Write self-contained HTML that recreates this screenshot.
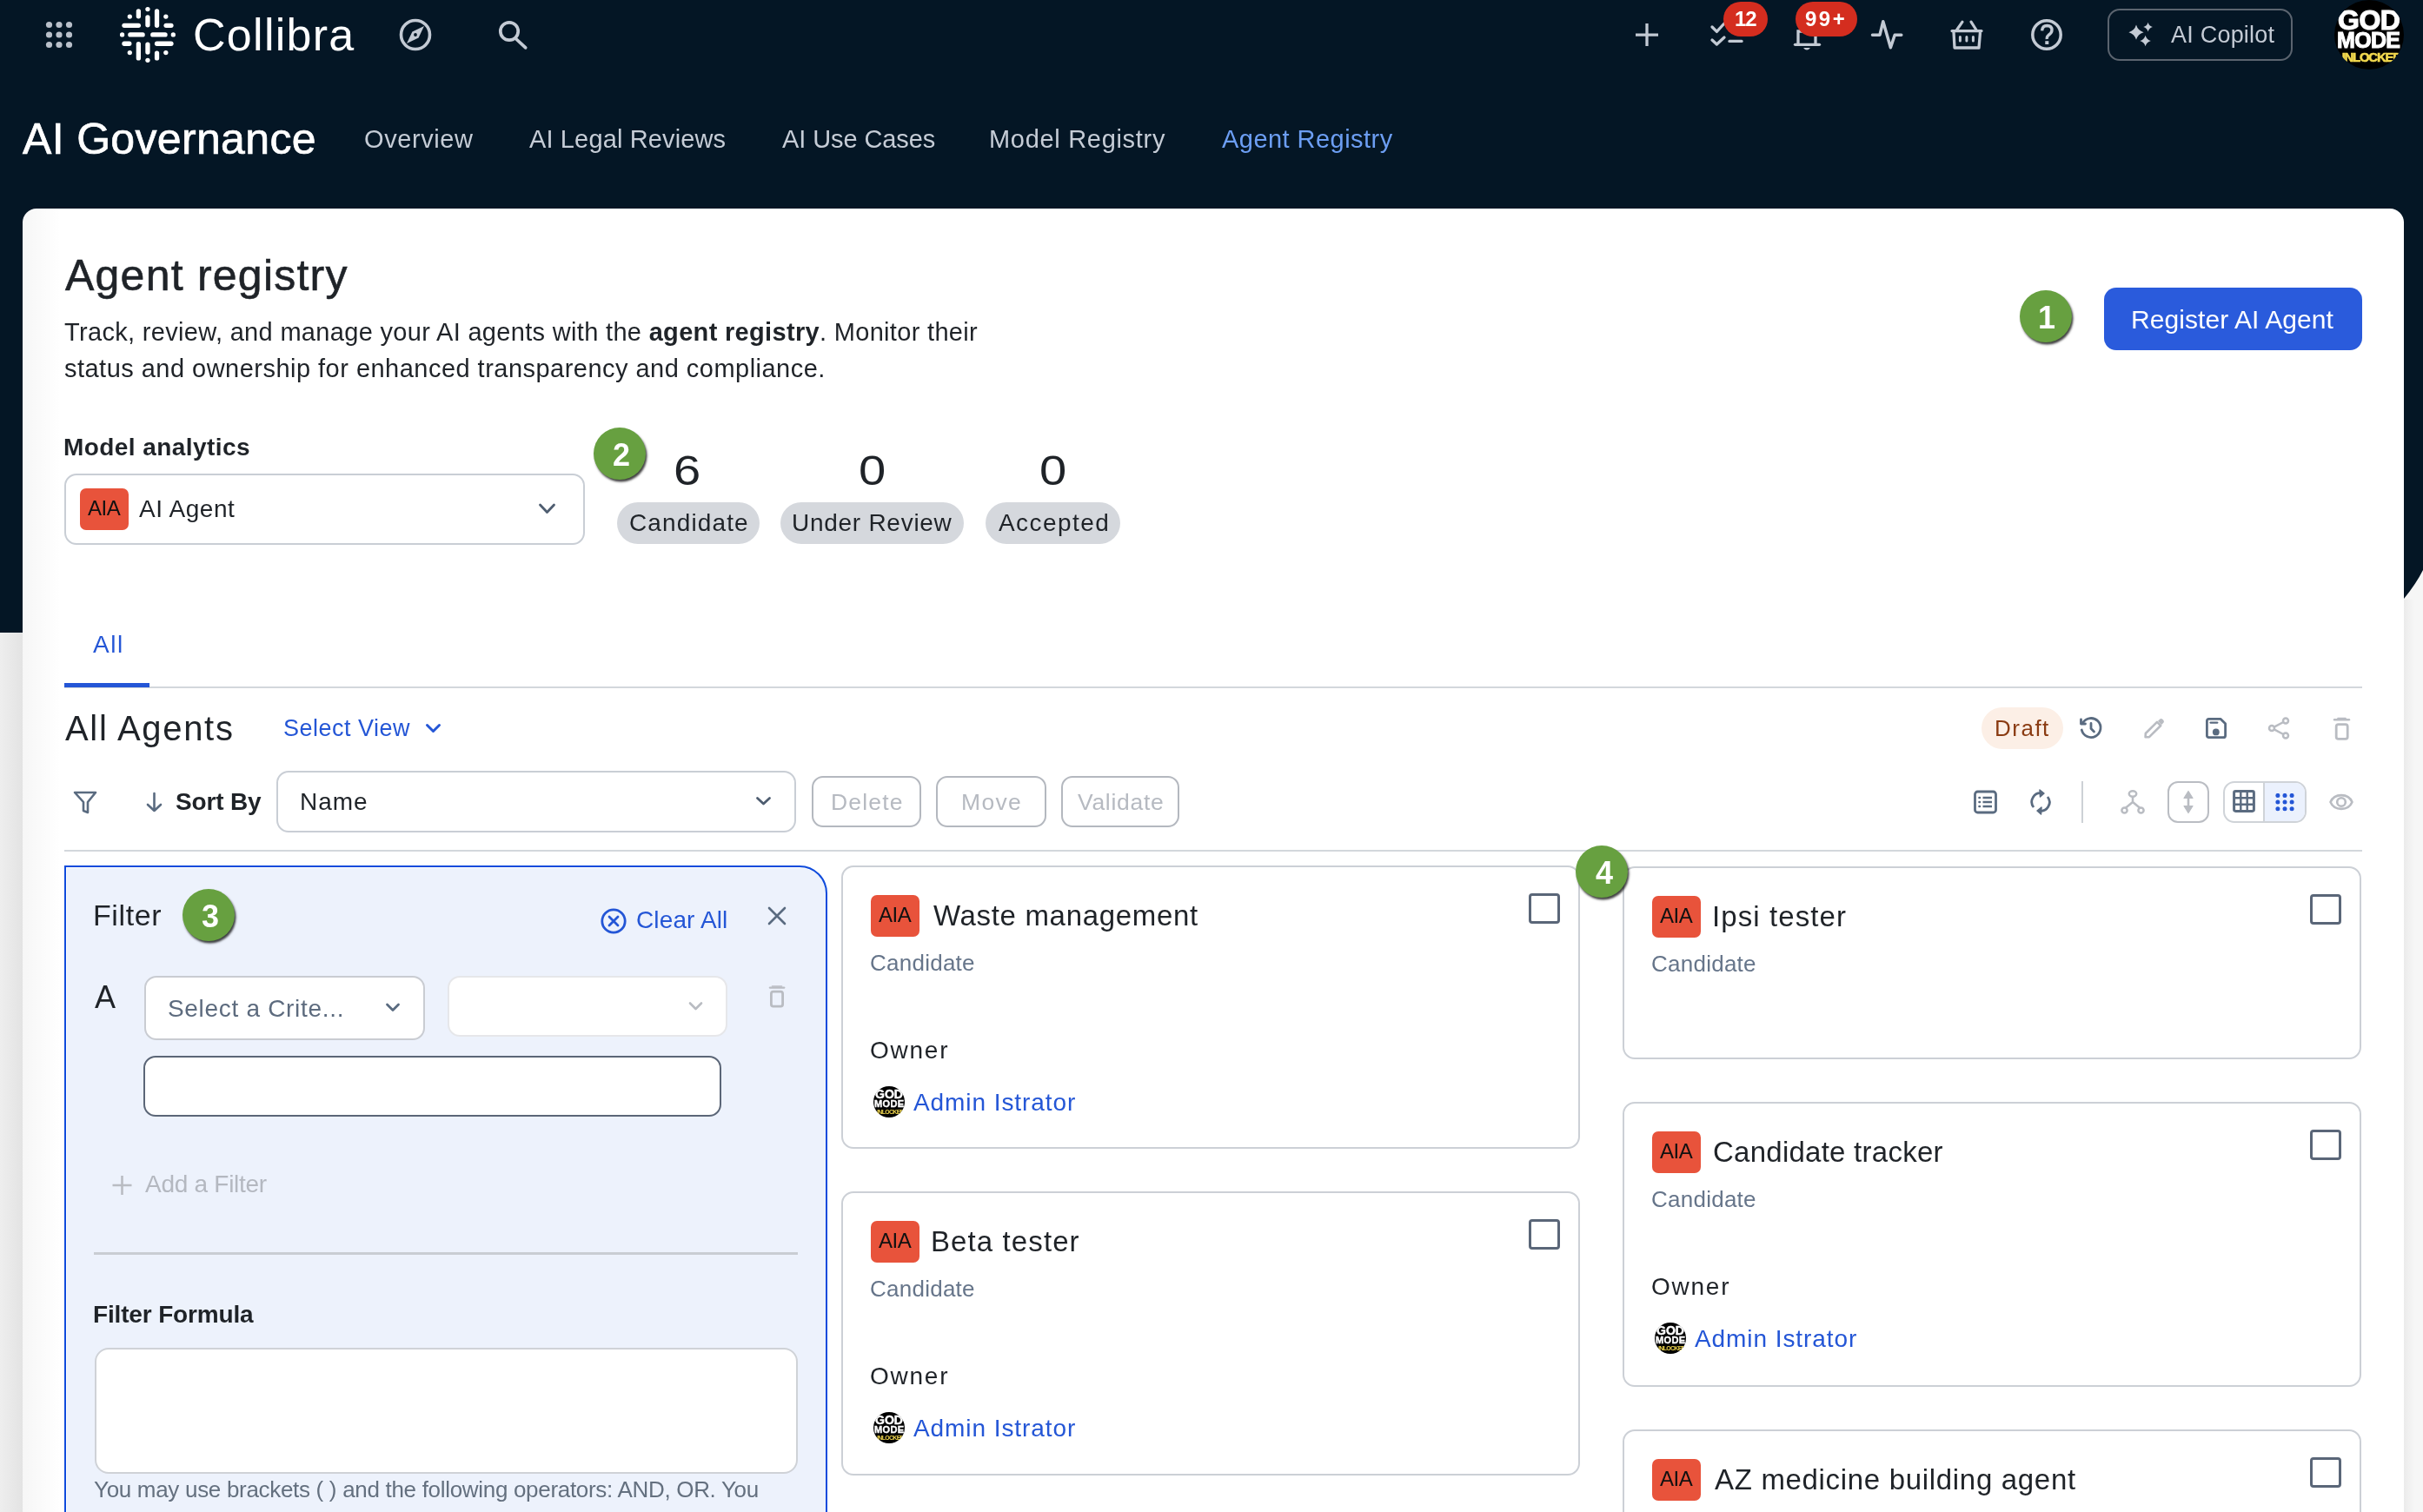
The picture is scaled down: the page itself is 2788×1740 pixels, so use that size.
<!DOCTYPE html><html><head><meta charset="utf-8"><style>
html,body{margin:0;padding:0;width:2788px;height:1740px;overflow:hidden;background:#f6f6f6}
body{position:relative;font-family:"Liberation Sans",sans-serif}
.t{position:absolute;white-space:nowrap;line-height:1;will-change:transform}
b{font-weight:700}
</style></head><body>
<div style="position:absolute;left:0px;top:0px;width:2788px;height:728px;background:#041625"></div>
<div style="position:absolute;left:0px;top:728px;width:26px;height:1012px;background:linear-gradient(90deg,#eeeeee,#e3e3e3)"></div>
<div style="position:absolute;left:2766px;top:689px;width:22px;height:1051px;background:linear-gradient(90deg,#ebebeb,#f6f6f6 12px)"></div>
<svg style="position:absolute;left:2766px;top:640px;" width="22" height="50" viewBox="0 0 22 50" fill="none"><path d="M0 49 Q14 32 22 16 L22 50 L0 50 Z" fill="#f6f6f6"/></svg>
<div style="position:absolute;left:26px;top:240px;width:2740px;height:1520px;background:linear-gradient(90deg,rgba(0,0,0,0.035),rgba(0,0,0,0) 44px),#fff;border-radius:16px 16px 0 0"></div>
<svg style="position:absolute;left:0px;top:0px;" width="120" height="80" viewBox="0 0 120 80" fill="none"><circle cx="56.5" cy="28.5" r="3.6" fill="#b9c0ca"/><circle cx="56.5" cy="40.0" r="3.6" fill="#b9c0ca"/><circle cx="56.5" cy="51.5" r="3.6" fill="#b9c0ca"/><circle cx="68.0" cy="28.5" r="3.6" fill="#b9c0ca"/><circle cx="68.0" cy="40.0" r="3.6" fill="#b9c0ca"/><circle cx="68.0" cy="51.5" r="3.6" fill="#b9c0ca"/><circle cx="79.5" cy="28.5" r="3.6" fill="#b9c0ca"/><circle cx="79.5" cy="40.0" r="3.6" fill="#b9c0ca"/><circle cx="79.5" cy="51.5" r="3.6" fill="#b9c0ca"/></svg>
<svg style="position:absolute;left:130px;top:0px;" width="80" height="80" viewBox="0 0 1512 1512" fill="none"><line x1="555" y1="245" x2="555" y2="355" stroke="#fff" stroke-width="100" stroke-linecap="round"/><line x1="555" y1="955" x2="555" y2="1265" stroke="#fff" stroke-width="100" stroke-linecap="round"/><line x1="755" y1="375" x2="755" y2="545" stroke="#fff" stroke-width="100" stroke-linecap="round"/><line x1="755" y1="965" x2="755" y2="1135" stroke="#fff" stroke-width="100" stroke-linecap="round"/><line x1="955" y1="245" x2="955" y2="555" stroke="#fff" stroke-width="100" stroke-linecap="round"/><line x1="955" y1="1155" x2="955" y2="1265" stroke="#fff" stroke-width="100" stroke-linecap="round"/><line x1="245" y1="555" x2="555" y2="555" stroke="#fff" stroke-width="100" stroke-linecap="round"/><line x1="1155" y1="555" x2="1265" y2="555" stroke="#fff" stroke-width="100" stroke-linecap="round"/><line x1="375" y1="755" x2="645" y2="755" stroke="#fff" stroke-width="100" stroke-linecap="round"/><line x1="865" y1="755" x2="1135" y2="755" stroke="#fff" stroke-width="100" stroke-linecap="round"/><line x1="245" y1="950" x2="355" y2="950" stroke="#fff" stroke-width="100" stroke-linecap="round"/><line x1="955" y1="950" x2="1265" y2="950" stroke="#fff" stroke-width="100" stroke-linecap="round"/><circle cx="755" cy="200" r="50.0" fill="#fff"/><circle cx="755" cy="1310" r="50.0" fill="#fff"/><circle cx="200" cy="755" r="50.0" fill="#fff"/><circle cx="1310" cy="755" r="50.0" fill="#fff"/><circle cx="365" cy="360" r="50.0" fill="#fff"/><circle cx="1150" cy="360" r="50.0" fill="#fff"/><circle cx="365" cy="1145" r="50.0" fill="#fff"/><circle cx="1150" cy="1145" r="50.0" fill="#fff"/></svg>
<div id="t1" class="t" style="left:222.00px;top:14.47px;font-size:52px;color:#ffffff;font-weight:400;letter-spacing:1.286px;">Collibra</div>
<svg style="position:absolute;left:450px;top:12px;" width="56" height="56" viewBox="0 0 56 56" fill="none"><circle cx="28" cy="28" r="16.5" stroke="#c3cad4" stroke-width="3.6"/><path d="M38 18 L31.6 31.6 L18 38 L24.4 24.4 Z" fill="#c3cad4"/><circle cx="28" cy="28" r="1.9" fill="#041625"/></svg>
<svg style="position:absolute;left:560px;top:10px;" width="56" height="56" viewBox="0 0 56 56" fill="none"><circle cx="26" cy="26" r="10.2" stroke="#c3cad4" stroke-width="3.7"/><line x1="33.5" y1="34.5" x2="44.7" y2="44.9" stroke="#c3cad4" stroke-width="3.7" stroke-linecap="round"/></svg>
<svg style="position:absolute;left:1870px;top:10px;" width="50" height="60" viewBox="0 0 50 60" fill="none"><path d="M12 30.1 H38 M25 17 V43" stroke="#c3cad4" stroke-width="3.3"/></svg>
<svg style="position:absolute;left:1960px;top:10px;" width="60" height="60" viewBox="0 0 60 60" fill="none"><path d="M10 21 L15.4 26.4 L24 17 M10 36 L15.4 41 L24 33" stroke="#c3cad4" stroke-width="3.3" stroke-linecap="round" stroke-linejoin="round"/><line x1="30" y1="37.4" x2="44" y2="37.4" stroke="#c3cad4" stroke-width="3.3" stroke-linecap="round"/></svg>
<svg style="position:absolute;left:2055px;top:10px;" width="50" height="60" viewBox="0 0 50 60" fill="none"><path d="M14 42 V26 H34 V42" stroke="#c3cad4" stroke-width="3.3"/><line x1="10.5" y1="41.3" x2="38.5" y2="41.3" stroke="#c3cad4" stroke-width="3.3" stroke-linecap="round"/><path d="M20 45 H28 Q24 50 20 45Z" fill="#c3cad4"/></svg>
<div style="position:absolute;left:1983px;top:2px;width:51px;height:40px;background:#d42d1f;border-radius:20px"></div>
<div id="t2" class="t" style="left:1996.00px;top:9.98px;font-size:24px;color:#fff;font-weight:700;letter-spacing:-1.000px;">12</div>
<div style="position:absolute;left:2066px;top:2px;width:71px;height:40px;background:#d42d1f;border-radius:20px"></div>
<div id="t3" class="t" style="left:2077.40px;top:9.98px;font-size:24px;color:#fff;font-weight:700;letter-spacing:2.500px;">99+</div>
<svg style="position:absolute;left:2140px;top:10px;" width="60" height="60" viewBox="0 0 60 60" fill="none"><polyline points="14.5,30.2 23,30.2 26.8,14.7 35.4,44.7 40.2,30.2 47.8,30.2" stroke="#c3cad4" stroke-width="3.5" stroke-linecap="round" stroke-linejoin="round"/></svg>
<svg style="position:absolute;left:2230px;top:10px;" width="60" height="60" viewBox="0 0 60 60" fill="none"><line x1="16" y1="25.6" x2="50" y2="25.6" stroke="#c3cad4" stroke-width="3.2" stroke-linecap="round"/><path d="M18 27 L19 45 H47 L48.5 27" stroke="#c3cad4" stroke-width="3.3" stroke-linejoin="round"/><path d="M21.5 24.5 L28 15.2 M44 24.5 L38 15.2" stroke="#c3cad4" stroke-width="3.2" stroke-linecap="round"/><path d="M25.4 32.5 V37 M32.9 32.5 V37 M40.4 32.5 V37" stroke="#c3cad4" stroke-width="3" stroke-linecap="round"/></svg>
<svg style="position:absolute;left:2325px;top:10px;" width="60" height="60" viewBox="0 0 60 60" fill="none"><circle cx="30" cy="30" r="16.2" stroke="#c3cad4" stroke-width="3.5"/><path d="M24.6 25.4 Q25 19.5 30.5 19.5 Q36 19.7 36 24.5 Q36 28 32 30.5 Q30 32 30.3 35" stroke="#c3cad4" stroke-width="3.4" fill="none"/><rect x="28.3" y="37.2" width="4" height="3.8" fill="#c3cad4"/></svg>
<div style="position:absolute;left:2425px;top:10px;width:213px;height:60px;box-sizing:border-box;border:2.5px solid #5b646f;border-radius:14px"></div>
<svg style="position:absolute;left:2440px;top:15px;" width="50" height="50" viewBox="0 0 50 50" fill="none"><path d="M18 13.6 Q19.892 20.308 26.6 22.2 Q19.892 24.092 18 30.799999999999997 Q16.108 24.092 9.4 22.2 Q16.108 20.308 18 13.6Z" fill="#c3cad4"/><path d="M31.6 10.8 Q32.766 14.934000000000001 36.9 16.1 Q32.766 17.266000000000002 31.6 21.400000000000002 Q30.434 17.266000000000002 26.3 16.1 Q30.434 14.934000000000001 31.6 10.8Z" fill="#c3cad4"/><path d="M28.6 25.7 Q29.986 30.614 34.9 32 Q29.986 33.386 28.6 38.3 Q27.214000000000002 33.386 22.3 32 Q27.214000000000002 30.614 28.6 25.7Z" fill="#c3cad4"/></svg>
<div id="t4" class="t" style="left:2498.20px;top:26.54px;font-size:27px;color:#c3cad4;font-weight:400;letter-spacing:0.222px;">AI Copilot</div>
<div style="position:absolute;left:2686px;top:0px;width:80px;height:80px;border-radius:50%;background:#000;overflow:hidden"></div>
<div id="t5" class="t" style="left:2690.00px;top:7.11px;font-size:32px;color:#fff;font-weight:700;letter-spacing:-0.500px;-webkit-text-stroke:1.2px #fff;clip-path:circle(40px at 36.00px 32.89px)">GOD</div>
<div id="t6" class="t" style="left:2689.00px;top:33.83px;font-size:25px;color:#fff;font-weight:700;letter-spacing:-0.667px;-webkit-text-stroke:1px #fff;clip-path:circle(40px at 37.00px 6.17px)">MODE</div>
<div id="t7" class="t" style="left:2688.00px;top:57.80px;font-size:15px;color:#f3d94e;font-weight:700;letter-spacing:-1.286px;-webkit-text-stroke:0.6px #f3d94e;clip-path:circle(40px at 38.00px -17.80px)">UNLOCKED</div>
<div id="t8" class="t" style="left:26.00px;top:134.66px;font-size:50px;color:#ffffff;font-weight:400;letter-spacing:0.333px;-webkit-text-stroke:0.7px #fff">AI Governance</div>
<div id="t9" class="t" style="left:419.00px;top:146.45px;font-size:29px;color:#c5ccd6;font-weight:400;letter-spacing:0.571px;">Overview</div>
<div id="t10" class="t" style="left:609.00px;top:146.45px;font-size:29px;color:#c5ccd6;font-weight:400;letter-spacing:0.133px;">AI Legal Reviews</div>
<div id="t11" class="t" style="left:900.00px;top:146.45px;font-size:29px;color:#c5ccd6;font-weight:400;letter-spacing:-0.091px;">AI Use Cases</div>
<div id="t12" class="t" style="left:1138.00px;top:146.45px;font-size:29px;color:#c5ccd6;font-weight:400;letter-spacing:0.692px;">Model Registry</div>
<div id="t13" class="t" style="left:1406.00px;top:146.45px;font-size:29px;color:#6c9ef3;font-weight:400;letter-spacing:0.462px;">Agent Registry</div>
<div id="t14" class="t" style="left:75.00px;top:291.67px;font-size:50px;color:#1f2328;font-weight:400;letter-spacing:1.231px;-webkit-text-stroke:0.6px #1f2328">Agent registry</div>
<div id="t15" class="t" style="left:74.00px;top:368.45px;font-size:29px;color:#1f2328;font-weight:400;letter-spacing:0.321px;">Track, review, and manage your AI agents with the <b>agent registry</b>. Monitor their</div>
<div id="t16" class="t" style="left:74.00px;top:410.45px;font-size:29px;color:#1f2328;font-weight:400;letter-spacing:0.475px;">status and ownership for enhanced transparency and compliance.</div>
<div style="position:absolute;left:2421px;top:331px;width:297px;height:72px;background:#2a5bdc;border-radius:14px"></div>
<div id="t17" class="t" style="left:2452.00px;top:352.60px;font-size:30px;color:#fff;font-weight:400;letter-spacing:0.062px;">Register AI Agent</div>
<div style="position:absolute;left:2324px;top:334px;width:60px;height:60px;background:#67a040;border-radius:50%;box-shadow:1.5px 2.5px 2.5px rgba(0,0,0,0.75)"></div>
<div id="t18" class="t" style="left:2344.50px;top:347.52px;font-size:36px;color:#fff;font-weight:700;letter-spacing:0.000px;">1</div>
<div id="t19" class="t" style="left:73.00px;top:501.29px;font-size:28px;color:#1f2328;font-weight:700;letter-spacing:0.429px;">Model analytics</div>
<div style="position:absolute;left:74px;top:545px;width:599px;height:82px;box-sizing:border-box;border:2px solid #c9ced5;border-radius:14px;background:#fff"></div>
<div style="position:absolute;left:92px;top:562px;width:56px;height:48px;background:#e8533b;border-radius:7px"></div>
<div id="t20" class="t" style="left:101.00px;top:572.68px;font-size:24px;color:#111;font-weight:400;letter-spacing:-0.500px;">AIA</div>
<div id="t21" class="t" style="left:160.00px;top:572.29px;font-size:28px;color:#1f2328;font-weight:400;letter-spacing:0.571px;">AI Agent</div>
<svg style="position:absolute;left:612px;top:570px;" width="36" height="30" viewBox="0 0 36 30" fill="none"><path d="M9.5 11 L17.5 19.5 L25.5 11" stroke="#4e5d70" stroke-width="2.8" stroke-linecap="round" stroke-linejoin="round"/></svg>
<div style="position:absolute;left:683px;top:492px;width:60px;height:60px;background:#67a040;border-radius:50%;box-shadow:1.5px 2.5px 2.5px rgba(0,0,0,0.75)"></div>
<div id="t22" class="t" style="left:704.50px;top:505.52px;font-size:36px;color:#fff;font-weight:700;letter-spacing:0.000px;">2</div>
<div id="t23" class="t" style="left:775.00px;top:518.36px;font-size:48px;color:#1f2328;font-weight:400;letter-spacing:0.000px;transform:scaleX(1.17);transform-origin:0 0">6</div>
<div id="t24" class="t" style="left:988.00px;top:518.36px;font-size:48px;color:#1f2328;font-weight:400;letter-spacing:0.000px;transform:scaleX(1.17);transform-origin:0 0">0</div>
<div id="t25" class="t" style="left:1196.00px;top:518.36px;font-size:48px;color:#1f2328;font-weight:400;letter-spacing:0.000px;transform:scaleX(1.17);transform-origin:0 0">0</div>
<div style="position:absolute;left:710px;top:578px;width:164px;height:48px;background:#d5d8dd;border-radius:24px"></div>
<div style="position:absolute;left:898px;top:578px;width:211px;height:48px;background:#d5d8dd;border-radius:24px"></div>
<div style="position:absolute;left:1134px;top:578px;width:155px;height:48px;background:#d5d8dd;border-radius:24px"></div>
<div id="t26" class="t" style="left:724.00px;top:588.29px;font-size:28px;color:#1f2328;font-weight:400;letter-spacing:1.125px;">Candidate</div>
<div id="t27" class="t" style="left:911.00px;top:588.29px;font-size:28px;color:#1f2328;font-weight:400;letter-spacing:0.727px;">Under Review</div>
<div id="t28" class="t" style="left:1149.00px;top:588.29px;font-size:28px;color:#1f2328;font-weight:400;letter-spacing:1.429px;">Accepted</div>
<div id="t29" class="t" style="left:107.00px;top:728.29px;font-size:28px;color:#2456d6;font-weight:400;letter-spacing:1.500px;">All</div>
<div style="position:absolute;left:74px;top:790px;width:2644px;height:2px;background:#d3d7dc"></div>
<div style="position:absolute;left:74px;top:786px;width:98px;height:5px;background:#2456d6"></div>
<div id="t30" class="t" style="left:75.00px;top:818.13px;font-size:40px;color:#1f2328;font-weight:400;letter-spacing:1.667px;">All Agents</div>
<div id="t31" class="t" style="left:326.00px;top:825.14px;font-size:27px;color:#2456d6;font-weight:400;letter-spacing:0.500px;">Select View</div>
<svg style="position:absolute;left:485px;top:825px;" width="28" height="28" viewBox="0 0 28 28" fill="none"><path d="M6.5 9.5 L13.5 16.5 L20.5 9.5" stroke="#2456d6" stroke-width="3" stroke-linecap="round" stroke-linejoin="round"/></svg>
<div style="position:absolute;left:2280px;top:814px;width:94px;height:48px;background:#fcefe6;border-radius:24px"></div>
<div id="t32" class="t" style="left:2295.00px;top:824.99px;font-size:26px;color:#8a3b12;font-weight:400;letter-spacing:1.500px;">Draft</div>
<svg style="position:absolute;left:2390px;top:822px;" width="32" height="32" viewBox="0 0 32 32" fill="none"><path d="M6.5 10 A11 11 0 1 1 5.3 18" stroke="#5a6b80" stroke-width="2.8" stroke-linecap="round"/><path d="M4.5 6 V11 H9.5" stroke="#5a6b80" stroke-width="2.8" stroke-linecap="round" stroke-linejoin="round"/><path d="M16 10.5 V16.5 L19.5 20" stroke="#5a6b80" stroke-width="2.8" stroke-linecap="round"/></svg>
<svg style="position:absolute;left:2462px;top:822px;" width="32" height="32" viewBox="0 0 32 32" fill="none"><path d="M6.6 26.2 L6.8 22 L20 8.8 L24.2 13 L11 26.2 Z" stroke="#b9bcc2" stroke-width="2.6" stroke-linejoin="round"/><path d="M21 7.8 L23.3 5.5 Q24.8 4.2 26.3 5.7 L27.3 6.7 Q28.7 8.2 27.4 9.7 L25.2 12 Z" fill="#b9bcc2"/></svg>
<svg style="position:absolute;left:2534px;top:822px;" width="32" height="32" viewBox="0 0 32 32" fill="none"><path d="M7.6 5.4 H21.2 L26.6 10.8 V24.4 Q26.6 26.6 24.4 26.6 H7.6 Q5.4 26.6 5.4 24.4 V7.6 Q5.4 5.4 7.6 5.4 Z" stroke="#5a6b80" stroke-width="2.8" stroke-linejoin="round"/><line x1="9.6" y1="9.6" x2="17.2" y2="9.6" stroke="#5a6b80" stroke-width="2.4" stroke-linecap="round"/><circle cx="15.8" cy="20.4" r="3.9" fill="#5a6b80"/></svg>
<svg style="position:absolute;left:2606px;top:822px;" width="32" height="32" viewBox="0 0 32 32" fill="none"><circle cx="24" cy="7.5" r="3" stroke="#b9bcc2" stroke-width="2.5"/><circle cx="8" cy="16" r="3" stroke="#b9bcc2" stroke-width="2.5"/><circle cx="24" cy="24.5" r="3" stroke="#b9bcc2" stroke-width="2.5"/><path d="M10.7 14.6 L21.3 9 M10.7 17.4 L21.3 23" stroke="#b9bcc2" stroke-width="2.5"/></svg>
<svg style="position:absolute;left:2680px;top:822px;" width="30" height="32" viewBox="0 0 30 32" fill="none"><rect x="8.2" y="11.7" width="13" height="16.6" rx="2.4" stroke="#b9bcc2" stroke-width="2.8"/><path d="M6 6.2 H23" stroke="#b9bcc2" stroke-width="2.4" stroke-linecap="round"/><path d="M10 4.6 H19" stroke="#b9bcc2" stroke-width="1.6" stroke-linecap="round"/></svg>
<svg style="position:absolute;left:80px;top:905px;" width="36" height="36" viewBox="0 0 36 36" fill="none"><path d="M6 7 H30 L21 18 V30 L16 28 V18 Z" stroke="#5a6b80" stroke-width="2.6" stroke-linejoin="round"/></svg>
<svg style="position:absolute;left:160px;top:905px;" width="36" height="36" viewBox="0 0 36 36" fill="none"><path d="M17.5 8 V28 M10 21 L17.5 28 L25 21" stroke="#5a6b80" stroke-width="2.6" stroke-linecap="round" stroke-linejoin="round"/></svg>
<div id="t33" class="t" style="left:202.00px;top:909.29px;font-size:28px;color:#1f2328;font-weight:700;letter-spacing:-0.167px;">Sort By</div>
<div style="position:absolute;left:318px;top:887px;width:598px;height:71px;box-sizing:border-box;border:2px solid #c9ced5;border-radius:14px;background:#fff"></div>
<div id="t34" class="t" style="left:345.00px;top:909.29px;font-size:28px;color:#1f2328;font-weight:400;letter-spacing:1.000px;">Name</div>
<svg style="position:absolute;left:864px;top:908px;" width="30" height="30" viewBox="0 0 30 30" fill="none"><path d="M7.5 10.5 L14.5 17 L21.5 10.5" stroke="#4e5d70" stroke-width="2.8" stroke-linecap="round" stroke-linejoin="round"/></svg>
<div style="position:absolute;left:934px;top:893px;width:126px;height:59px;box-sizing:border-box;border:2px solid #b4b8bf;border-radius:13px"></div>
<div id="t35" class="t" style="left:956.00px;top:909.56px;font-size:26.5px;color:#b6bac1;font-weight:400;letter-spacing:1.200px;">Delete</div>
<div style="position:absolute;left:1077px;top:893px;width:127px;height:59px;box-sizing:border-box;border:2px solid #b4b8bf;border-radius:13px"></div>
<div id="t36" class="t" style="left:1106.00px;top:909.56px;font-size:26.5px;color:#b6bac1;font-weight:400;letter-spacing:1.333px;">Move</div>
<div style="position:absolute;left:1221px;top:893px;width:136px;height:59px;box-sizing:border-box;border:2px solid #b4b8bf;border-radius:13px"></div>
<div id="t37" class="t" style="left:1240.00px;top:909.56px;font-size:26.5px;color:#b6bac1;font-weight:400;letter-spacing:0.714px;">Validate</div>
<div style="position:absolute;left:74px;top:978px;width:2644px;height:2px;background:#d3d7dc"></div>
<svg style="position:absolute;left:2268px;top:906px;" width="32" height="34" viewBox="0 0 32 34" fill="none"><rect x="4.5" y="5" width="24" height="24" rx="3" stroke="#5a6b80" stroke-width="2.8"/><path d="M9.5 12 H10 M9.5 17 H10 M9.5 22 H10" stroke="#5a6b80" stroke-width="2.6" stroke-linecap="round"/><path d="M13.5 12 H24 M13.5 17 H24 M13.5 22 H24" stroke="#5a6b80" stroke-width="2.6"/></svg>
<svg style="position:absolute;left:2332px;top:906px;" width="32" height="34" viewBox="0 0 32 34" fill="none"><path d="M8 23 A10 10 0 0 1 18 7" stroke="#5a6b80" stroke-width="2.8"/><path d="M24 11 A10 10 0 0 1 14 27" stroke="#5a6b80" stroke-width="2.8"/><path d="M15 3 L20 7 L15.5 11 Z M17 23 L12 27 L16.5 31 Z" fill="#5a6b80" stroke="#5a6b80" stroke-width="1.5" stroke-linejoin="round"/></svg>
<div style="position:absolute;left:2395px;top:899px;width:2px;height:48px;background:#cdd1d6"></div>
<svg style="position:absolute;left:2438px;top:906px;" width="32" height="34" viewBox="0 0 32 34" fill="none"><ellipse cx="16" cy="7.5" rx="4.2" ry="3.2" stroke="#b9bcc2" stroke-width="2.5"/><path d="M16 11 V17 M16 17 L7.5 24 M16 17 L24.5 24" stroke="#b9bcc2" stroke-width="2.5"/><circle cx="6.5" cy="26.5" r="3.1" stroke="#b9bcc2" stroke-width="2.5"/><circle cx="25.5" cy="26.5" r="3.1" stroke="#b9bcc2" stroke-width="2.5"/></svg>
<div style="position:absolute;left:2494px;top:899px;width:48px;height:48px;box-sizing:border-box;border:2px solid #babdc3;border-radius:12px"></div>
<svg style="position:absolute;left:2504px;top:906px;" width="28" height="34" viewBox="0 0 28 34" fill="none"><path d="M14 9 V25" stroke="#b9bcc2" stroke-width="2.6"/><path d="M9 12.5 L14 4.5 L19 12.5 Z M9 21.5 L14 29.5 L19 21.5 Z" fill="#b9bcc2" stroke="#b9bcc2" stroke-width="1.2" stroke-linejoin="round"/></svg>
<div style="position:absolute;left:2558px;top:899px;width:96px;height:48px;box-sizing:border-box;border:2px solid #cfd3d8;border-radius:13px;overflow:hidden"></div>
<div style="position:absolute;left:2605px;top:901px;width:47px;height:44px;background:#ebf1fd;border-radius:0 11px 11px 0"></div>
<div style="position:absolute;left:2604px;top:901px;width:2px;height:44px;background:#cfd3d8"></div>
<svg style="position:absolute;left:2566px;top:906px;" width="32" height="34" viewBox="0 0 32 34" fill="none"><rect x="4.6" y="4.6" width="22.8" height="22.8" rx="1.8" stroke="#5a6b80" stroke-width="3"/><path d="M12.3 4.5 V27.5 M19.7 4.5 V27.5 M4.5 12.3 H27.5 M4.5 19.7 H27.5" stroke="#5a6b80" stroke-width="2.4"/></svg>
<svg style="position:absolute;left:2616px;top:913px;" width="26" height="24" viewBox="0 0 26 24" fill="none"><circle cx="4.9" cy="2.4" r="2.5" fill="#2456d6"/><circle cx="4.9" cy="10.1" r="2.5" fill="#2456d6"/><circle cx="4.9" cy="17.8" r="2.5" fill="#2456d6"/><circle cx="13.0" cy="2.4" r="2.5" fill="#2456d6"/><circle cx="13.0" cy="10.1" r="2.5" fill="#2456d6"/><circle cx="13.0" cy="17.8" r="2.5" fill="#2456d6"/><circle cx="21.1" cy="2.4" r="2.5" fill="#2456d6"/><circle cx="21.1" cy="10.1" r="2.5" fill="#2456d6"/><circle cx="21.1" cy="17.8" r="2.5" fill="#2456d6"/></svg>
<svg style="position:absolute;left:2676px;top:906px;" width="36" height="34" viewBox="0 0 36 34" fill="none"><path d="M5.5 17 C10 6.5 26 6.5 30.5 17 C26 27.5 10 27.5 5.5 17 Z" stroke="#b9bcc2" stroke-width="2.6" stroke-linejoin="round"/><circle cx="18" cy="17" r="4.8" stroke="#b9bcc2" stroke-width="2.6"/></svg>
<div style="position:absolute;left:74px;top:996px;width:878px;height:800px;box-sizing:border-box;border:2px solid #0f4bdc;border-radius:0 32px 32px 0;background:#edf2fc;box-shadow:inset 1px 1px 0 #fff"></div>
<div id="t38" class="t" style="left:107.00px;top:1036.41px;font-size:34px;color:#1f2328;font-weight:400;letter-spacing:0.600px;">Filter</div>
<div style="position:absolute;left:210px;top:1023px;width:60px;height:60px;background:#67a040;border-radius:50%;box-shadow:1.5px 2.5px 2.5px rgba(0,0,0,0.75)"></div>
<div id="t39" class="t" style="left:231.50px;top:1036.52px;font-size:36px;color:#fff;font-weight:700;letter-spacing:0.000px;">3</div>
<svg style="position:absolute;left:688px;top:1042px;" width="36" height="36" viewBox="0 0 36 36" fill="none"><circle cx="18" cy="18" r="13.2" stroke="#2456d6" stroke-width="2.8"/><path d="M13 13 L23 23 M23 13 L13 23" stroke="#2456d6" stroke-width="2.8" stroke-linecap="round"/></svg>
<div id="t40" class="t" style="left:732.00px;top:1045.29px;font-size:28px;color:#2456d6;font-weight:400;letter-spacing:0.125px;">Clear All</div>
<svg style="position:absolute;left:878px;top:1038px;" width="32" height="32" viewBox="0 0 32 32" fill="none"><path d="M7 7 L25 25 M25 7 L7 25" stroke="#5a6b80" stroke-width="2.6" stroke-linecap="round"/></svg>
<div id="t41" class="t" style="left:109.00px;top:1129.52px;font-size:36px;color:#1f2328;font-weight:400;letter-spacing:0.000px;">A</div>
<div style="position:absolute;left:166px;top:1123px;width:323px;height:74px;box-sizing:border-box;border:2px solid #c9ccd2;border-radius:14px;background:#fff"></div>
<div id="t42" class="t" style="left:193.00px;top:1147.29px;font-size:28px;color:#5d6b7e;font-weight:400;letter-spacing:0.688px;">Select a Crite...</div>
<svg style="position:absolute;left:438px;top:1148px;" width="28" height="24" viewBox="0 0 28 24" fill="none"><path d="M7.5 8 L14 14.5 L20.5 8" stroke="#5a6b80" stroke-width="2.8" stroke-linecap="round" stroke-linejoin="round"/></svg>
<div style="position:absolute;left:515px;top:1123px;width:322px;height:70px;box-sizing:border-box;border:2px solid #e6e7ea;border-radius:14px;background:#fff"></div>
<svg style="position:absolute;left:786px;top:1146px;" width="28" height="24" viewBox="0 0 28 24" fill="none"><path d="M8 8.5 L14.5 15 L21 8.5" stroke="#b9bcc2" stroke-width="2.6" stroke-linecap="round" stroke-linejoin="round"/></svg>
<svg style="position:absolute;left:878px;top:1128px;" width="32" height="36" viewBox="0 0 32 36" fill="none"><rect x="9.4" y="13.2" width="13.2" height="17" rx="2.4" stroke="#b9bcc2" stroke-width="2.8"/><path d="M8 8.6 H24.2" stroke="#b9bcc2" stroke-width="2.4" stroke-linecap="round"/><path d="M10.5 7 H21.5" stroke="#b9bcc2" stroke-width="1.6" stroke-linecap="round"/></svg>
<div style="position:absolute;left:165px;top:1215px;width:665px;height:70px;box-sizing:border-box;border:2px solid #5b6677;border-radius:14px;background:#fff"></div>
<svg style="position:absolute;left:120px;top:1348px;" width="40" height="36" viewBox="0 0 40 36" fill="none"><path d="M20.5 5 V27 M9.5 16 H31.5" stroke="#b9bcc2" stroke-width="2.6"/></svg>
<div id="t43" class="t" style="left:167.00px;top:1349.29px;font-size:28px;color:#b4b8c0;font-weight:400;letter-spacing:-0.273px;">Add a Filter</div>
<div style="position:absolute;left:108px;top:1441px;width:810px;height:2.5px;background:#c9cdd3"></div>
<div id="t44" class="t" style="left:107.00px;top:1499.29px;font-size:28px;color:#1f2328;font-weight:700;letter-spacing:-0.154px;">Filter Formula</div>
<div style="position:absolute;left:109px;top:1551px;width:809px;height:145px;box-sizing:border-box;border:2px solid #cfd2d7;border-radius:16px;background:#fff"></div>
<div id="t45" class="t" style="left:108.00px;top:1700.99px;font-size:26px;color:#64707f;font-weight:400;letter-spacing:-0.308px;">You may use brackets ( ) and the following operators: AND, OR. You</div>
<div style="position:absolute;left:968px;top:996px;width:850px;height:326px;box-sizing:border-box;border:2px solid #ccd0d6;border-radius:14px;background:#fff"></div>
<div style="position:absolute;left:1002px;top:1030px;width:56px;height:48px;background:#e8533b;border-radius:7px"></div>
<div id="t46" class="t" style="left:1011.00px;top:1040.68px;font-size:24px;color:#111;font-weight:400;letter-spacing:-0.500px;">AIA</div>
<div id="t47" class="t" style="left:1074.00px;top:1036.56px;font-size:33px;color:#1f2328;font-weight:400;letter-spacing:0.667px;">Waste management</div>
<div style="position:absolute;left:1759px;top:1028px;width:36px;height:35px;box-sizing:border-box;border:3px solid #5a6678;border-radius:4px"></div>
<div id="t48" class="t" style="left:1001.00px;top:1094.99px;font-size:26px;color:#66758a;font-weight:400;letter-spacing:0.250px;">Candidate</div>
<div id="t49" class="t" style="left:1001.00px;top:1195.29px;font-size:28px;color:#1f2328;font-weight:400;letter-spacing:1.750px;">Owner</div>
<div style="position:absolute;left:1005px;top:1250px;width:36px;height:36px;border-radius:50%;background:#000;overflow:hidden"></div>
<div id="t50" class="t" style="left:1007.00px;top:1252.15px;font-size:14px;color:#fff;font-weight:700;letter-spacing:0.000px;-webkit-text-stroke:0.5px #fff;clip-path:circle(18px at 16.00px 15.85px)">GOD</div>
<div id="t51" class="t" style="left:1005.50px;top:1265.19px;font-size:11px;color:#fff;font-weight:700;letter-spacing:0.333px;-webkit-text-stroke:0.4px #fff;clip-path:circle(18px at 17.50px 2.81px)">MODE</div>
<div id="t52" class="t" style="left:1006.00px;top:1275.57px;font-size:7px;color:#f3d94e;font-weight:700;letter-spacing:-0.714px;;clip-path:circle(18px at 17.00px -7.57px)">UNLOCKED</div>
<div id="t53" class="t" style="left:1051.00px;top:1255.29px;font-size:28px;color:#2456d6;font-weight:400;letter-spacing:0.923px;">Admin Istrator</div>
<div style="position:absolute;left:968px;top:1371px;width:850px;height:327px;box-sizing:border-box;border:2px solid #ccd0d6;border-radius:14px;background:#fff"></div>
<div style="position:absolute;left:1002px;top:1405px;width:56px;height:48px;background:#e8533b;border-radius:7px"></div>
<div id="t54" class="t" style="left:1011.00px;top:1415.68px;font-size:24px;color:#111;font-weight:400;letter-spacing:-0.500px;">AIA</div>
<div id="t55" class="t" style="left:1071.00px;top:1411.56px;font-size:33px;color:#1f2328;font-weight:400;letter-spacing:1.100px;">Beta tester</div>
<div style="position:absolute;left:1759px;top:1403px;width:36px;height:35px;box-sizing:border-box;border:3px solid #5a6678;border-radius:4px"></div>
<div id="t56" class="t" style="left:1001.00px;top:1469.99px;font-size:26px;color:#66758a;font-weight:400;letter-spacing:0.250px;">Candidate</div>
<div id="t57" class="t" style="left:1001.00px;top:1570.29px;font-size:28px;color:#1f2328;font-weight:400;letter-spacing:1.750px;">Owner</div>
<div style="position:absolute;left:1005px;top:1625px;width:36px;height:36px;border-radius:50%;background:#000;overflow:hidden"></div>
<div id="t58" class="t" style="left:1007.00px;top:1627.15px;font-size:14px;color:#fff;font-weight:700;letter-spacing:0.000px;-webkit-text-stroke:0.5px #fff;clip-path:circle(18px at 16.00px 15.85px)">GOD</div>
<div id="t59" class="t" style="left:1005.50px;top:1640.19px;font-size:11px;color:#fff;font-weight:700;letter-spacing:0.333px;-webkit-text-stroke:0.4px #fff;clip-path:circle(18px at 17.50px 2.81px)">MODE</div>
<div id="t60" class="t" style="left:1006.00px;top:1650.57px;font-size:7px;color:#f3d94e;font-weight:700;letter-spacing:-0.714px;;clip-path:circle(18px at 17.00px -7.57px)">UNLOCKED</div>
<div id="t61" class="t" style="left:1051.00px;top:1630.29px;font-size:28px;color:#2456d6;font-weight:400;letter-spacing:0.923px;">Admin Istrator</div>
<div style="position:absolute;left:1867px;top:997px;width:850px;height:222px;box-sizing:border-box;border:2px solid #ccd0d6;border-radius:14px;background:#fff"></div>
<div style="position:absolute;left:1901px;top:1031px;width:56px;height:48px;background:#e8533b;border-radius:7px"></div>
<div id="t62" class="t" style="left:1910.00px;top:1041.68px;font-size:24px;color:#111;font-weight:400;letter-spacing:-0.500px;">AIA</div>
<div id="t63" class="t" style="left:1970.00px;top:1037.56px;font-size:33px;color:#1f2328;font-weight:400;letter-spacing:1.100px;">Ipsi tester</div>
<div style="position:absolute;left:2658px;top:1029px;width:36px;height:35px;box-sizing:border-box;border:3px solid #5a6678;border-radius:4px"></div>
<div id="t64" class="t" style="left:1900.00px;top:1095.99px;font-size:26px;color:#66758a;font-weight:400;letter-spacing:0.250px;">Candidate</div>
<div style="position:absolute;left:1867px;top:1268px;width:850px;height:328px;box-sizing:border-box;border:2px solid #ccd0d6;border-radius:14px;background:#fff"></div>
<div style="position:absolute;left:1901px;top:1302px;width:56px;height:48px;background:#e8533b;border-radius:7px"></div>
<div id="t65" class="t" style="left:1910.00px;top:1312.68px;font-size:24px;color:#111;font-weight:400;letter-spacing:-0.500px;">AIA</div>
<div id="t66" class="t" style="left:1971.00px;top:1308.56px;font-size:33px;color:#1f2328;font-weight:400;letter-spacing:0.250px;">Candidate tracker</div>
<div style="position:absolute;left:2658px;top:1300px;width:36px;height:35px;box-sizing:border-box;border:3px solid #5a6678;border-radius:4px"></div>
<div id="t67" class="t" style="left:1900.00px;top:1366.99px;font-size:26px;color:#66758a;font-weight:400;letter-spacing:0.250px;">Candidate</div>
<div id="t68" class="t" style="left:1900.00px;top:1467.29px;font-size:28px;color:#1f2328;font-weight:400;letter-spacing:1.750px;">Owner</div>
<div style="position:absolute;left:1904px;top:1522px;width:36px;height:36px;border-radius:50%;background:#000;overflow:hidden"></div>
<div id="t69" class="t" style="left:1906.00px;top:1524.15px;font-size:14px;color:#fff;font-weight:700;letter-spacing:0.000px;-webkit-text-stroke:0.5px #fff;clip-path:circle(18px at 16.00px 15.85px)">GOD</div>
<div id="t70" class="t" style="left:1904.50px;top:1537.19px;font-size:11px;color:#fff;font-weight:700;letter-spacing:0.333px;-webkit-text-stroke:0.4px #fff;clip-path:circle(18px at 17.50px 2.81px)">MODE</div>
<div id="t71" class="t" style="left:1905.00px;top:1547.57px;font-size:7px;color:#f3d94e;font-weight:700;letter-spacing:-0.714px;;clip-path:circle(18px at 17.00px -7.57px)">UNLOCKED</div>
<div id="t72" class="t" style="left:1950.00px;top:1527.29px;font-size:28px;color:#2456d6;font-weight:400;letter-spacing:0.923px;">Admin Istrator</div>
<div style="position:absolute;left:1867px;top:1645px;width:850px;height:200px;box-sizing:border-box;border:2px solid #ccd0d6;border-radius:14px;background:#fff"></div>
<div style="position:absolute;left:1901px;top:1679px;width:56px;height:48px;background:#e8533b;border-radius:7px"></div>
<div id="t73" class="t" style="left:1910.00px;top:1689.68px;font-size:24px;color:#111;font-weight:400;letter-spacing:-0.500px;">AIA</div>
<div id="t74" class="t" style="left:1973.00px;top:1685.56px;font-size:33px;color:#1f2328;font-weight:400;letter-spacing:0.680px;">AZ medicine building agent</div>
<div style="position:absolute;left:2658px;top:1677px;width:36px;height:35px;box-sizing:border-box;border:3px solid #5a6678;border-radius:4px"></div>
<div id="t75" class="t" style="left:1901.00px;top:1743.99px;font-size:26px;color:#66758a;font-weight:400;letter-spacing:0.000px;">Candidate</div>
<div style="position:absolute;left:1813px;top:973px;width:60px;height:60px;background:#67a040;border-radius:50%;box-shadow:1.5px 2.5px 2.5px rgba(0,0,0,0.75)"></div>
<div id="t76" class="t" style="left:1835.50px;top:986.52px;font-size:36px;color:#fff;font-weight:700;letter-spacing:0.000px;">4</div>
</body></html>
